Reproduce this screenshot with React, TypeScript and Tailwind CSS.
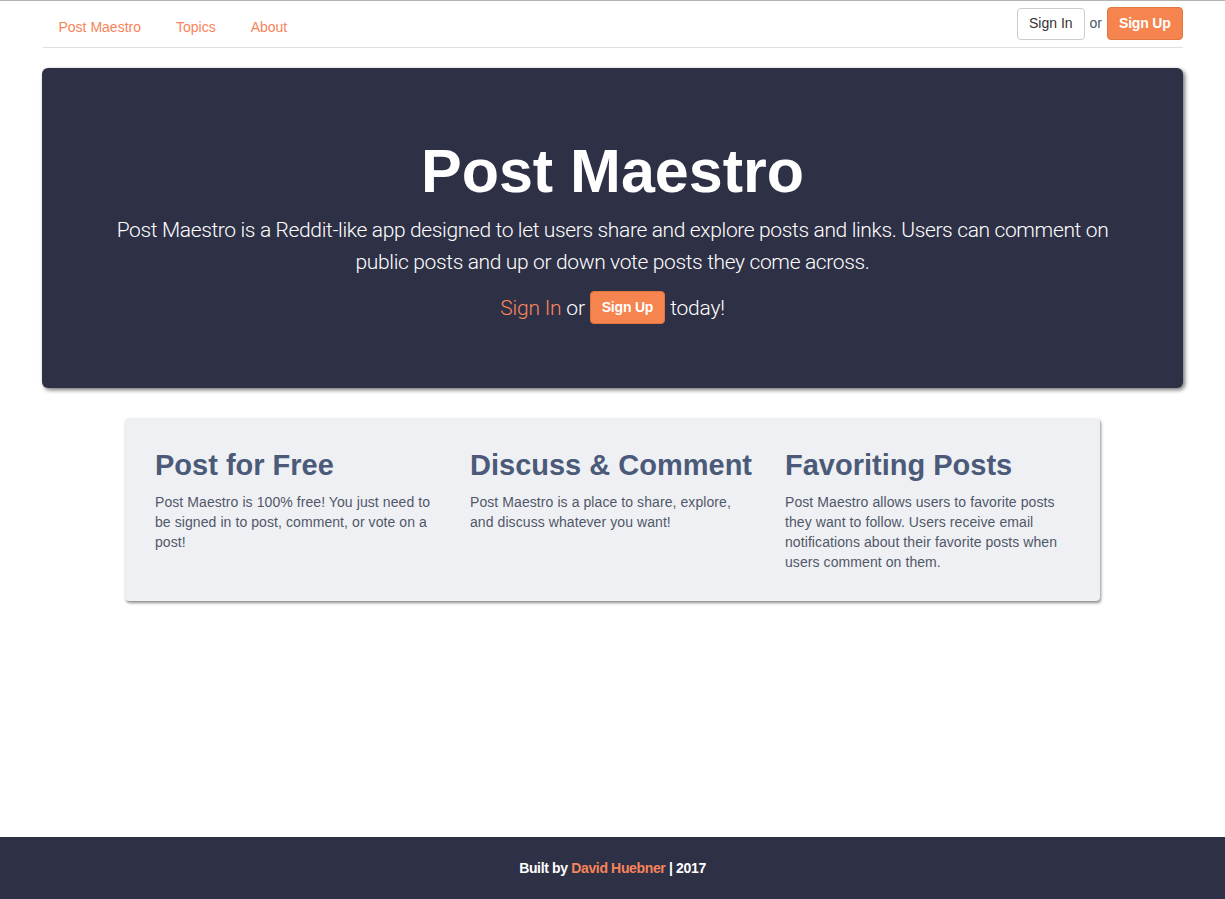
import React from "react";

export default function App() {
  return (
    <div
      className="min-h-screen flex flex-col bg-white border-t border-[#b3b3b3]"
      style={{ fontFamily: '"Liberation Sans", Arial, Helvetica, sans-serif' }}
    >
      <div className="w-[1140px] mx-auto flex justify-between items-start h-[47px] border-b border-[#e0e0e0]">
        <ul className="flex gap-[2px] text-[14px] leading-[20px] text-[#f5845a] mt-[16px]">
          <li className="px-[16px]">Post Maestro</li>
          <li className="px-[16px] ml-[1px]">Topics</li>
          <li className="px-[16px] ml-[1px]">About</li>
        </ul>
        <div className="flex items-center mt-[6px] text-[14px]">
          <button className="h-[32px] px-[11px] border border-[#cccccc] rounded-[4px] bg-white text-[#333]">
            Sign In
          </button>
          <span className="mx-[5px] text-[#4a5568]">or</span>
          <button className="h-[33px] px-[11px] rounded-[4px] bg-[#f5844f] border border-[#e0763f] text-white font-bold tracking-[-0.2px]">
            Sign Up
          </button>
        </div>
      </div>

      <div className="w-[1141px] mx-auto mt-[20px] bg-[#2e3046] rounded-[6px] shadow-[2px_2px_4px_rgba(0,0,0,0.55)] px-[60px] pt-[69px] pb-[47px] text-center text-white">
        <h1 className="text-[61px] leading-[68px] font-bold mb-[10px]">Post Maestro</h1>
        <div style={{ fontFamily: 'Roboto, "Liberation Sans", Arial, sans-serif' }}>
          <p className="text-[21px] leading-[31.5px] mb-[15px] font-light tracking-[-0.36px]">
            Post Maestro is a Reddit-like app designed to let users share and explore posts and links. Users can comment on
            public posts and up or down vote posts they come across.
          </p>
          <p className="text-[21px] leading-[31.5px] mb-[15px] font-light tracking-[-0.2px]">
            <span className="text-[#f7875c]">Sign In</span> or{" "}
            <button
              className="h-[33px] px-[11px] rounded-[4px] bg-[#f5844f] border border-[#e0763f] text-white font-bold text-[14px] tracking-[-0.2px] align-middle relative -top-[2px]"
              style={{ fontFamily: '"Liberation Sans", Arial, sans-serif' }}
            >
              Sign Up
            </button>{" "}
            today!
          </p>
        </div>
      </div>

      <div className="w-[975px] mx-auto mt-[30px] bg-[#eff0f4] rounded-[4px] shadow-[1px_2px_3px_rgba(0,0,0,0.45)] px-[15px] pt-[31px] pb-[29px] grid grid-cols-3">
        <div className="px-[15px]">
          <h2 className="text-[29px] leading-[33px] font-bold text-[#4b5a78] mb-[10px]">Post for Free</h2>
          <p className="text-[14px] leading-[20px] text-[#4f5868] tracking-[0.08px]">
            Post Maestro is 100% free! You just need to be signed in to post, comment, or vote on a post!
          </p>
        </div>
        <div className="px-[15px]">
          <h2 className="text-[29px] leading-[33px] font-bold text-[#4b5a78] mb-[10px]">Discuss &amp; Comment</h2>
          <p className="text-[14px] leading-[20px] text-[#4f5868] tracking-[0.08px]">
            Post Maestro is a place to share, explore, and discuss whatever you want!
          </p>
        </div>
        <div className="px-[15px]">
          <h2 className="text-[29px] leading-[33px] font-bold text-[#4b5a78] mb-[10px]">Favoriting Posts</h2>
          <p className="text-[14px] leading-[20px] text-[#4f5868] tracking-[0.08px]">
            Post Maestro allows users to favorite posts they want to follow. Users receive email notifications about
            their favorite posts when users comment on them.
          </p>
        </div>
      </div>

      <footer className="mt-auto h-[62px] bg-[#2e3046] flex items-center justify-center text-[14px] font-bold text-white tracking-[-0.35px]">
        <span>
          Built by <span className="text-[#f5845a]">David Huebner</span> | 2017
        </span>
      </footer>
    </div>
  );
}
